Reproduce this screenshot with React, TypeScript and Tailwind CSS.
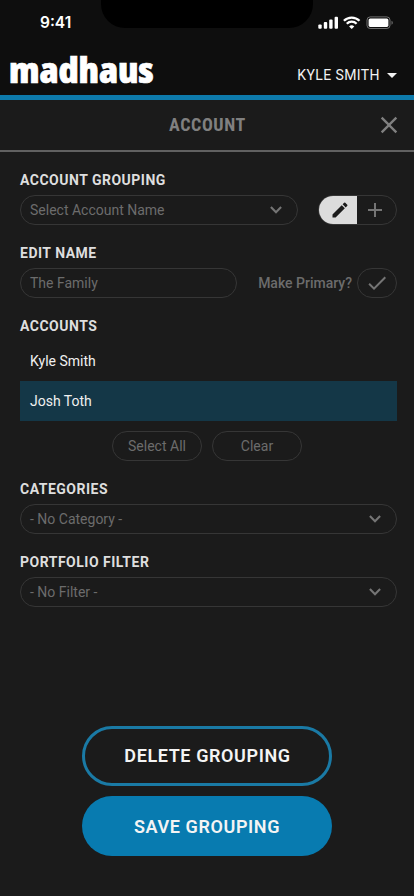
import { ReactNode, useState } from "react";
import { MdAdd, MdCheck, MdClose, MdEdit } from "react-icons/md";

const accounts = [
  { id: 1, name: "Kyle Smith" },
  { id: 2, name: "Josh Toth" },
];

function StatusBar() {
  return (
    <div className="relative flex h-[45px] items-center justify-between pr-[21px] pl-10 text-white">
      <div className="absolute top-0 left-[101px] h-7 w-[212px] rounded-b-[24px] bg-black" />
      <span className="font-[Inter,sans-serif] text-[15.5px] leading-none font-semibold">
        9:41
      </span>
      <svg width="76" height="14" viewBox="0 0 76 14" fill="currentColor">
        <rect x="1.3" y="8.5" width="3.4" height="4.3" rx="1" />
        <rect x="6.8" y="6" width="3.4" height="6.8" rx="1" />
        <rect x="12.2" y="3.5" width="3.4" height="9.3" rx="1" />
        <rect x="17.6" y="0.7" width="3.4" height="12.1" rx="1" />
        <path
          d="M26.9 4.8a11 11 0 0 1 15.6 0M29.8 7.8a6.8 6.8 0 0 1 9.8 0"
          fill="none"
          stroke="currentColor"
          strokeWidth="2.3"
        />
        <path d="M34.7 13l-2.6-2.6a3.8 3.8 0 0 1 5.2 0z" />
        <rect
          x="50"
          y="0.9"
          width="23"
          height="11.6"
          rx="3.2"
          fill="none"
          stroke="currentColor"
          strokeOpacity="0.4"
        />
        <rect x="51.6" y="2.5" width="19.8" height="8.4" rx="1.6" />
        <path d="M74.6 4.8v4c1.4-.5 1.4-3.5 0-4z" opacity="0.5" />
      </svg>
    </div>
  );
}

function Header() {
  return (
    <header className="h-[100px] border-b-5 border-[#0d7aab] bg-[#0e0e0e]">
      <StatusBar />
      <div className="flex h-[50px] items-center justify-between pr-[17px] pl-[9px]">
        <span className="origin-left scale-x-[1.075] pb-px font-['Open_Sans',sans-serif] text-[36px] leading-[48px] font-extrabold tracking-[-0.1px] text-white [-webkit-text-stroke:0.7px_white] [font-stretch:75%]">
          madhaus
        </span>
        <button className="flex items-center gap-[7px] pt-[10px] text-sm tracking-[0.4px] text-[#f2f2f2]">
          KYLE SMITH
          <svg width="10" height="5" viewBox="0 0 10 5" fill="currentColor">
            <path d="M0 0h10L5 5z" />
          </svg>
        </button>
      </div>
    </header>
  );
}

function Label({ children }: { children: ReactNode }) {
  return (
    <h2 className="flex h-[30px] items-center text-sm font-bold tracking-[0.5px] text-[#dedede]">
      {children}
    </h2>
  );
}

function Select({ value }: { value: string }) {
  return (
    <button className="flex h-[30px] w-full items-center justify-between rounded-full border border-[#363636] pr-[15px] pl-[9px] text-sm text-[#6c6c6c]">
      {value}
      <svg width="12" height="8" viewBox="0 0 12 8" fill="none" className="text-[#757575]">
        <path d="M0.9 1.1L6 6.2l5.1-5.1" stroke="currentColor" strokeWidth="2.1" />
      </svg>
    </button>
  );
}

export default function App() {
  const [selected, setSelected] = useState<number | null>(2);

  return (
    <div className="flex h-[896px] w-[414px] flex-col bg-[#1b1b1b] font-[Roboto,sans-serif]">
      <Header />
      <div className="relative flex h-[52px] items-center justify-center border-b-2 border-[#616161] text-[#808080]">
        <h1 className="pl-px text-lg font-bold tracking-[0.6px] [font-stretch:75%]">ACCOUNT</h1>
        <button className="absolute right-[11px]">
          <MdClose size={28} />
        </button>
      </div>
      <main className="flex flex-1 flex-col gap-[13px] pt-[13px] pr-[17px] pl-5">
        <section>
          <Label>ACCOUNT GROUPING</Label>
          <div className="flex justify-between">
            <div className="w-[278px]">
              <Select value="Select Account Name" />
            </div>
            <div className="flex h-[30px] w-[79px] overflow-hidden rounded-full border border-[#363636]">
              <button className="flex w-[38px] items-center justify-center bg-[#dcdcdc] pl-1 text-[#1b1b1b]">
                <MdEdit size={20} />
              </button>
              <button className="flex flex-1 items-center justify-center pr-1 text-[#757575]">
                <MdAdd size={24} />
              </button>
            </div>
          </div>
        </section>
        <section>
          <Label>EDIT NAME</Label>
          <div className="flex items-center">
            <div className="flex h-[30px] w-[217px] items-center rounded-full border border-[#363636] pl-[9px] text-sm text-[#6c6c6c]">
              The Family
            </div>
            <span className="ml-auto text-sm font-medium text-[#6c6c6c]">Make Primary?</span>
            <button className="ml-[5px] flex h-[30px] w-10 items-center justify-center rounded-full border border-[#363636] text-[#757575]">
              <MdCheck size={24} />
            </button>
          </div>
        </section>
        <section>
          <Label>ACCOUNTS</Label>
          <ul>
            {accounts.map((account) => (
              <li
                key={account.id}
                onClick={() => setSelected(account.id)}
                className={`flex h-10 items-center px-2.5 text-sm text-[#f0f0f0] ${selected === account.id ? "bg-[#143747]" : ""}`}
              >
                {account.name}
              </li>
            ))}
          </ul>
          <div className="mt-2.5 flex justify-center gap-2.5 pr-[3px] text-sm text-[#6c6c6c]">
            <button className="h-[30px] w-[90px] rounded-full border border-[#363636]">
              Select All
            </button>
            <button
              onClick={() => setSelected(null)}
              className="h-[30px] w-[90px] rounded-full border border-[#363636]"
            >
              Clear
            </button>
          </div>
        </section>
        <section>
          <Label>CATEGORIES</Label>
          <Select value="- No Category -" />
        </section>
        <section>
          <Label>PORTFOLIO FILTER</Label>
          <Select value="- No Filter -" />
        </section>
      </main>
      <footer className="flex flex-col items-center gap-2.5 pb-10 text-lg font-semibold tracking-[0.6px] text-[#f4f4f4]">
        <button className="h-[60px] w-[250px] rounded-full border-3 border-[#1a7aa5] pl-px">
          DELETE GROUPING
        </button>
        <button className="h-[60px] w-[250px] rounded-full bg-[#087bb0] pt-0.5">
          SAVE GROUPING
        </button>
      </footer>
    </div>
  );
}
